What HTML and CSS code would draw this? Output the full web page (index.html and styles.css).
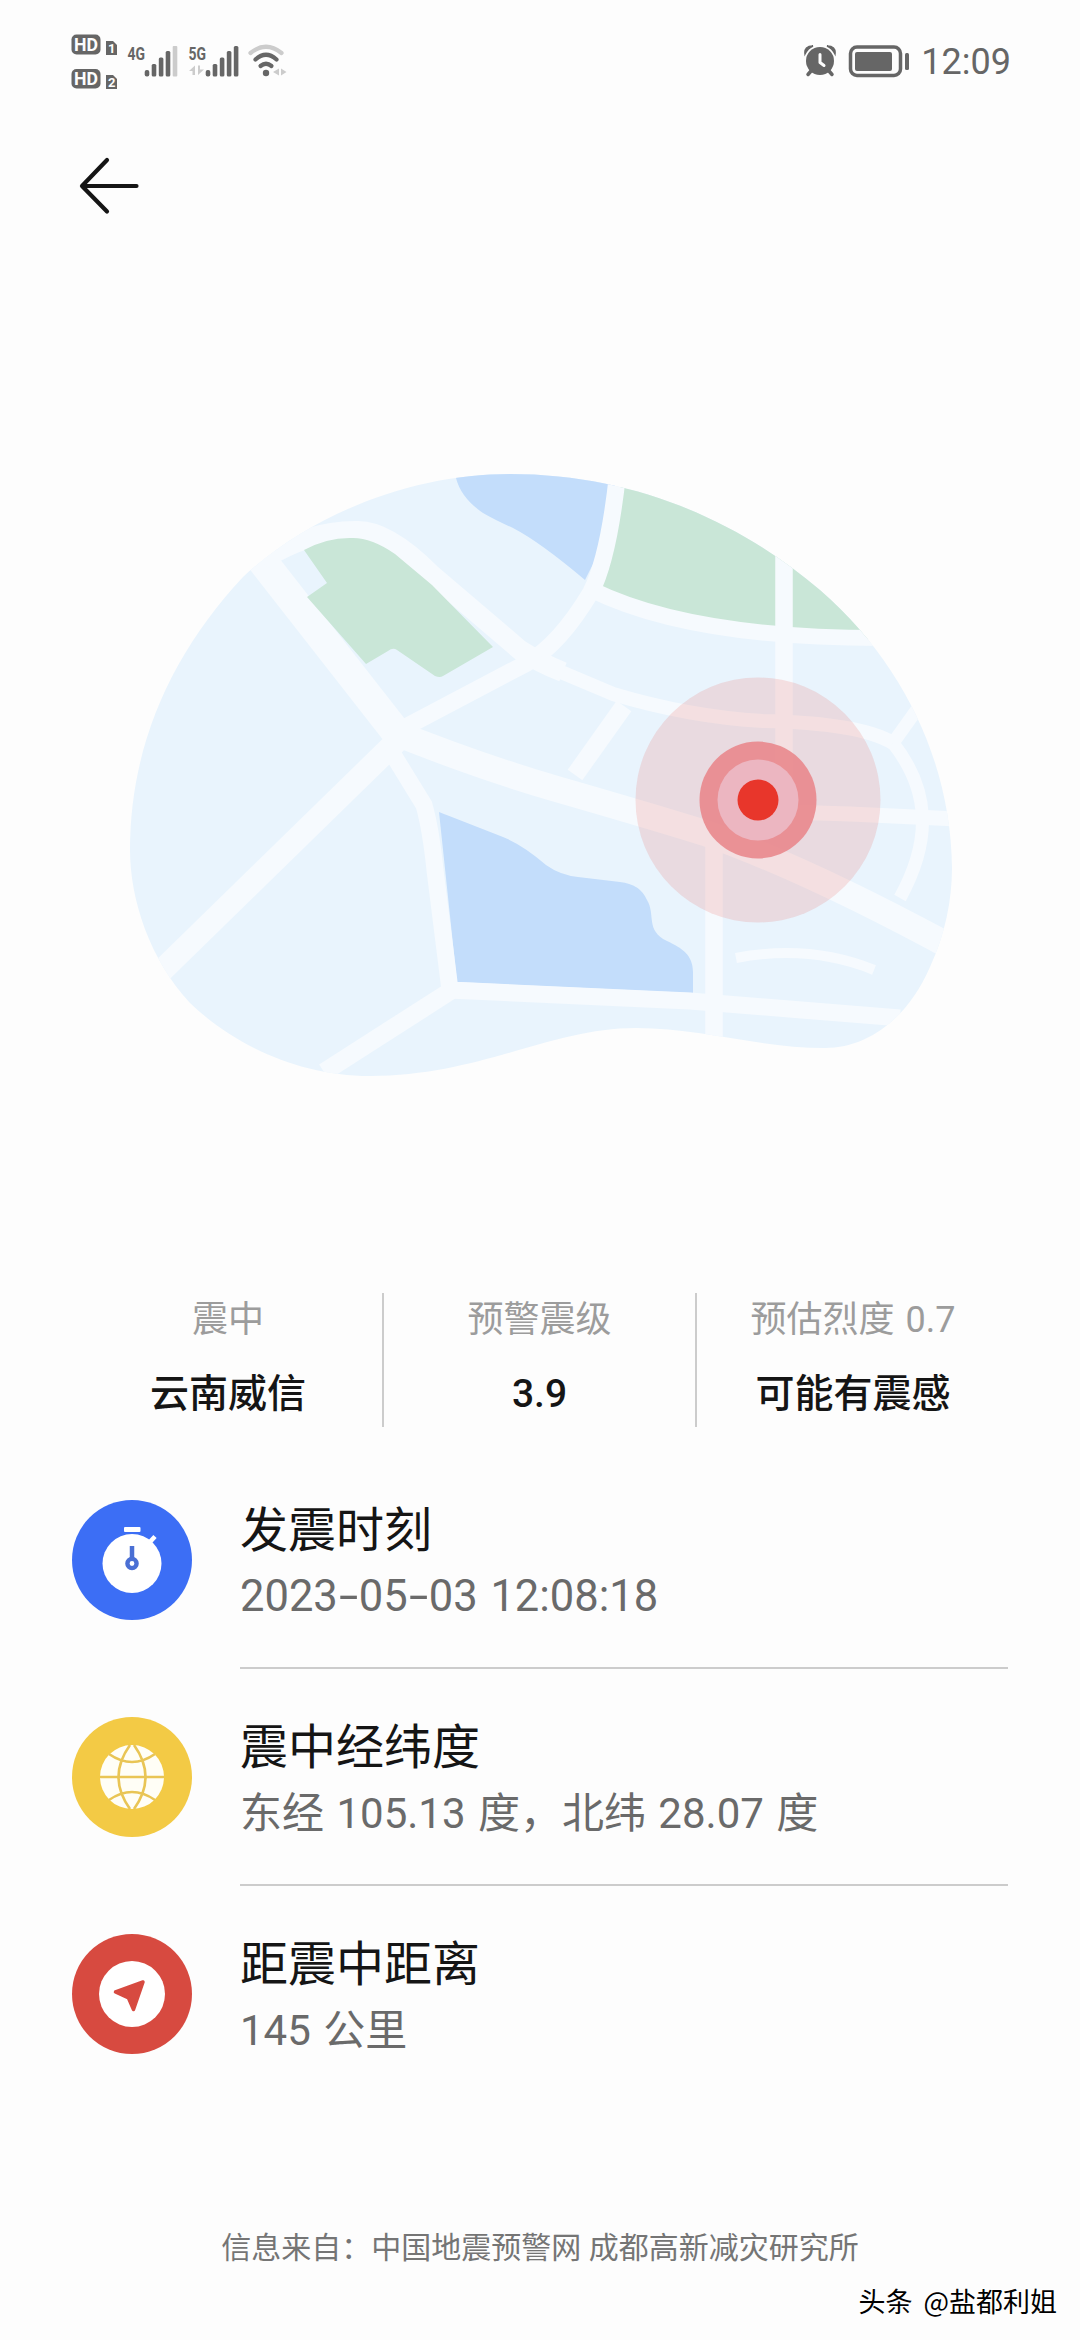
FILE: index.html
```html
<!DOCTYPE html>
<html lang="zh-CN">
<head>
<meta charset="utf-8">
<title>地震预警</title>
<link rel="stylesheet" href="styles.css">
</head>
<body>
<div class="screen">
  <header class="status">
    <svg class="status-left" width="220" height="64" viewBox="70 30 220 64">
      <g fill="#666">
        <rect x="71.500" y="34.500" width="29" height="20" rx="5"/>
        <rect x="71.500" y="69" width="29" height="19.500" rx="5"/>
        <path d="M106 41h7l4 4v10h-11z"/>
        <path d="M106 75h7l4 4v10h-11z"/>
        <rect x="144.700" y="70" width="4.600" height="6.500" rx="2"/>
        <rect x="151.700" y="64" width="4.600" height="12.500" rx="1.500"/>
        <rect x="158.800" y="57.500" width="4.600" height="19" rx="1.500"/>
        <rect x="165.700" y="51" width="4.600" height="25.500" rx="1.500"/>
        <rect x="205.700" y="70" width="4.600" height="6.500" rx="2"/>
        <rect x="212.700" y="64" width="4.600" height="12.500" rx="1.500"/>
        <rect x="219.800" y="57.500" width="4.600" height="19" rx="1.500"/>
        <rect x="226.800" y="51" width="4.600" height="25.500" rx="1.500"/>
        <rect x="233.800" y="46" width="4.600" height="30.500" rx="1.500"/>
        <circle cx="266" cy="73" r="3.200"/>
      </g>
      <g fill="#ccc">
        <rect x="172.700" y="46" width="4.600" height="30.500" rx="1"/>
        <path d="M189 71l6-5.500V75h-2.500v-4zM198 65.500h2v4h4l-6 5.500z"/>
        <path d="M279 68.500v7L273 72zM281 68.500v7l5.500-3.500z"/>
      </g>
      <g fill="none" stroke-linecap="round" stroke-width="4.200">
        <path d="M250.500 53Q266 40.500 281.500 53" stroke="#ccc"/>
        <path d="M255.500 59.500Q266 50 276.500 59.500" stroke="#666"/>
        <path d="M260.500 66Q266 61.500 271.500 66" stroke="#666"/>
      </g>
      <g class="net-text">
        <text class="hd" x="74" y="51" textLength="24" lengthAdjust="spacingAndGlyphs">HD</text>
        <text class="hd" x="74" y="85" textLength="24" lengthAdjust="spacingAndGlyphs">HD</text>
        <text class="sim" x="108" y="53">1</text>
        <text class="sim" x="108" y="87">2</text>
        <text class="gen" x="127.500" y="59.500" textLength="17.500" lengthAdjust="spacingAndGlyphs">4G</text>
        <text class="gen" x="188.500" y="59.500" textLength="17.500" lengthAdjust="spacingAndGlyphs">5G</text>
      </g>
    </svg>
    <div class="status-right">
      <svg width="32" height="32" viewBox="804 45 32 32">
        <g fill="#666">
          <circle cx="820" cy="61" r="14"/>
          <path d="M805 54q-1-8 8-8q-5 2-8 8zM835 54q1-8-8-8q5 2 8 8z" stroke="#666" stroke-width="1.500"/>
        </g>
        <path d="M811 71l-3 3.500M829 71l3 3.500" stroke="#666" stroke-width="3.500" stroke-linecap="round"/>
        <path d="M820 54.500v8l4 3" fill="none" stroke="#fdfdfd" stroke-width="3" stroke-linecap="round" stroke-linejoin="round"/>
      </svg>
      <svg class="battery" width="62" height="34" viewBox="848 44 62 34">
        <rect x="850.500" y="47" width="50" height="28.500" rx="6.500" fill="none" stroke="#666" stroke-width="3.500"/>
        <rect x="855" y="52" width="37" height="19" rx="2" fill="#666"/>
        <rect x="905" y="53" width="4" height="17" rx="1.500" fill="#666"/>
      </svg>
      <span class="clock">12:09</span>
    </div>
  </header>

  <nav class="nav">
    <svg width="64" height="64" viewBox="78 154 64 64">
      <path d="M107 160L82 186L107 211.500M82.500 186H136.500" fill="none" stroke="#151515" stroke-width="4.200" stroke-linecap="round" stroke-linejoin="round"/>
    </svg>
  </nav>

  <section class="map">
    <svg width="860" height="630" viewBox="110 460 860 630">
      <defs>
        <clipPath id="land">
          <path d="M130 850C130 745 172 653 243 577C318 508 420 474 510 474C635 474 740 522 820 590C905 664 951 765 952 868C952 900 945 935 930 967C908 1018 868 1048 825 1048C760 1048 700 1028 636 1028C550 1028 480 1076 370 1076C300 1076 235 1046 190 1003C150 960 130 900 130 850Z"/>
        </clipPath>
      </defs>
      <g clip-path="url(#land)">
        <rect x="110" y="460" width="860" height="630" fill="#e9f4fd"/>
        <path fill="#c3ddfb" d="M456 465V478Q461 498 483 513Q495 520 513 528Q540 542 585 580L600 550L620 465Z"/>
        <path fill="#c3ddfb" d="M439 812Q457 819 503 837Q523 845 546 865Q560 875 578 877L620 882Q640 884 647 900C656 915 645 930 667 941C682 948 693 955 693 972V993L457 982Z"/>
        <path fill="#c9e6d7" d="M598 585Q614 550 622 470H880V640Q700 638 598 585Z"/>
        <g fill="none" stroke="#f6fafe">
          <path stroke-width="30" d="M260 558L396 732"/>
          <path stroke-width="26" d="M388 730Q480 767 560 790T705 833Q810 870 960 952"/>
          <path stroke-width="23" d="M398 740L142 990"/>
          <path stroke-width="17" d="M398 731L527 663Q560 644 591 592Q609 557 618 470"/>
          <path stroke-width="20" d="M262 560Q310 530 358 531Q388 531 431 574L520 650Q540 663 563 672"/>
          <path stroke-width="14" d="M523 656L613 694Q690 717 763 721Q860 723 893 743"/>
          <path stroke-width="13" d="M893 743C930 790 932 840 900 898M893 743L918 708"/>
          <path stroke-width="18" d="M624 706L575 775"/>
          <path stroke-width="16" d="M592 590Q690 638 880 638"/>
          <path stroke-width="17.500" d="M784 530V820"/>
          <path stroke-width="17.500" d="M714 825V1050"/>
          <path stroke-width="15" d="M758 811L850 814L960 819"/>
          <path stroke-width="17" d="M389 748L424 805Q431 830 435 870L450 990L690 1001L900 1018"/>
          <path stroke-width="18" d="M452 990L324 1072"/>
          <path stroke-width="10" d="M736 958Q810 944 874 970"/>
        </g>
        <path fill="#c9e6d7" d="M304 550Q328 537 353 538Q372 538 395 554L432 585L493 647L443 676Q440 678 435 676L397 650Q393 647 388 651L366 664L307 597L327 583Z"/>
      </g>
      <circle cx="758" cy="800" r="122.500" fill="#eb3228" fill-opacity=".135"/>
      <circle cx="758" cy="800" r="58.500" fill="#e98c90" fill-opacity=".95"/>
      <circle cx="758" cy="800" r="40.500" fill="#ecb6c1"/>
      <circle cx="758" cy="800" r="20.500" fill="#e8362b"/>
    </svg>
  </section>

  <section class="stats">
    <div class="stat"><span class="stat-label">震中</span><span class="stat-value">云南威信</span></div>
    <div class="stat"><span class="stat-label">预警震级</span><span class="stat-value">3.9</span></div>
    <div class="stat"><span class="stat-label">预估烈度 0.7</span><span class="stat-value">可能有震感</span></div>
  </section>

  <ul class="list">
    <li class="item">
      <svg class="item-icon" viewBox="0 0 120 120">
        <circle cx="60" cy="60" r="60" fill="#3c6ef5"/>
        <circle cx="60" cy="63.500" r="29.500" fill="#fff"/>
        <rect x="52" y="27" width="16.500" height="5" rx="1" fill="#fff"/>
        <path d="M77 43l6-6.500" stroke="#fff" stroke-width="4.500"/>
        <path d="M60 46v14" stroke="#4a6fd4" stroke-width="4.500"/>
        <circle cx="60" cy="63.500" r="4.600" fill="#fff" stroke="#4a6fd4" stroke-width="4.400"/>
      </svg>
      <div class="item-body">
        <h2>发震时刻</h2>
        <p class="time">2023<i>-</i>05<i>-</i>03 12:08:18</p>
      </div>
    </li>
    <li class="item">
      <svg class="item-icon" viewBox="0 0 120 120">
        <circle cx="60" cy="60" r="60" fill="#f3ca45"/>
        <circle cx="60" cy="60" r="32" fill="#fffef6"/>
        <g fill="none" stroke="#e9c555" stroke-width="2.600">
          <path d="M28 60h64M37 37Q60 53 83 37M37 83Q60 67 83 83M58 28Q35 60 58 92M62 28Q85 60 62 92"/>
        </g>
      </svg>
      <div class="item-body">
        <h2>震中经纬度</h2>
        <p>东经 105.13 度，北纬 28.07 度</p>
      </div>
    </li>
    <li class="item">
      <svg class="item-icon" viewBox="0 0 120 120">
        <circle cx="60" cy="60" r="60" fill="#d74a40"/>
        <circle cx="60" cy="60" r="33" fill="#fff"/>
        <path d="M43.500 58L71 48L61.500 75.500L56.500 64Z" fill="#d74a40" stroke="#d74a40" stroke-width="3.500" stroke-linejoin="round"/>
      </svg>
      <div class="item-body">
        <h2>距震中距离</h2>
        <p>145 公里</p>
      </div>
    </li>
  </ul>

  <footer class="source">信息来自：中国地震预警网 成都高新减灾研究所</footer>
  <div class="watermark">头条 @盐都利姐</div>
</div>
</body>
</html>
```
FILE: styles.css
```css
* { box-sizing: border-box; margin: 0; padding: 0; }

body {
  background: #fdfdfd;
  font-family: Roboto, "Noto Sans CJK SC", sans-serif;
  color: #151515;
}

.screen {
  width: 1080px;
  height: 2340px;
  overflow: hidden;
  display: flex;
  flex-direction: column;
}

.status {
  height: 124px;
  flex: none;
  padding: 30px 70px 0;
  display: flex;
  justify-content: space-between;
  align-items: flex-start;
}
.status-left { display: block; }
.net-text { font-family: Roboto, sans-serif; font-weight: 700; }
.hd { font-size: 18px; fill: #fdfdfd; }
.sim { font-size: 13px; fill: #fdfdfd; }
.gen { font-size: 19px; fill: #666; }

.status-right {
  height: 62px;
  display: flex;
  align-items: center;
  gap: 12px;
}
.clock {
  font-size: 36px;
  line-height: 62px;
  color: #666;
  margin: 1px -1px 0 -1px;
}

.nav {
  height: 94px;
  flex: none;
  padding: 30px 78px 0;
}
.nav svg { display: block; }

.map {
  height: 1075px;
  flex: none;
  padding: 242px 110px 0;
}
.map svg { display: block; }

.stats {
  height: 134px;
  flex: none;
  margin: 0 71px 0 72px;
  display: grid;
  grid-template-columns: 310px 313px 314px;
}
.stat {
  padding-top: 1px;
  display: flex;
  flex-direction: column;
  align-items: center;
  white-space: nowrap;
}
.stat:first-child { padding-left: 2px; }
.stat + .stat { border-left: 2px solid #ccc; }
.stat-label {
  font-size: 36px;
  line-height: 52px;
  color: #9c9c9c;
  word-spacing: 2px;
}
.stat-value {
  margin-top: 20px;
  font-size: 39px;
  line-height: 56px;
  font-weight: 500;
}

.list {
  list-style: none;
  margin: 73px 72px 0;
}
.item {
  height: 217px;
  display: flex;
  gap: 48px;
}
.item-icon {
  width: 120px;
  height: 120px;
  flex: none;
}
.item-body {
  flex: 1;
  height: 169px;
  padding-top: 1px;
  border-bottom: 2px solid #ccc;
  white-space: nowrap;
}
.item:last-child .item-body { border-bottom: 0; }
h2 {
  font-size: 48px;
  line-height: 60px;
  font-weight: 400;
}
.item p {
  margin-top: 6px;
  font-size: 42px;
  line-height: 60px;
  color: #6a6a6a;
  word-spacing: 2px;
}
.item .time { font-size: 43.500px; }
.time i {
  display: inline-block;
  width: 21px;
  text-align: center;
  font-style: normal;
  transform: scaleX(1.6);
}

.source {
  margin-top: 75px;
  font-size: 30px;
  line-height: 44px;
  text-align: center;
  color: #757575;
}
.watermark {
  margin: 11px 23px 0 0;
  text-align: right;
  font-family: "Noto Sans CJK SC", sans-serif;
  font-size: 27px;
  line-height: 40px;
  word-spacing: 5px;
  color: #000;
  text-shadow: -1px -1px 0 #fff, 1px -1px 0 #fff;
}
```
